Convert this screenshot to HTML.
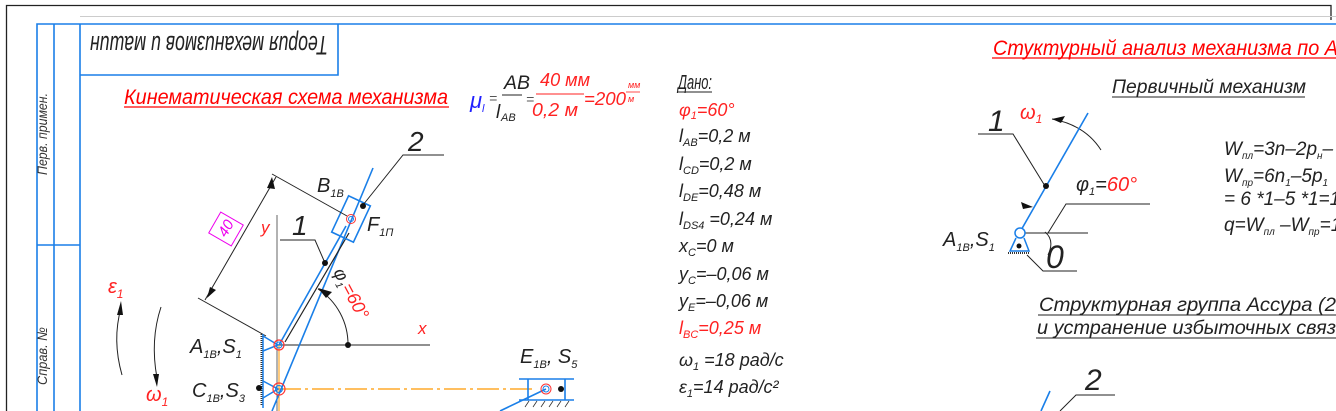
<!DOCTYPE html>
<html><head><meta charset="utf-8"><style>
html,body{margin:0;padding:0;background:#fff;}
svg{display:block}
text{font-family:"Liberation Sans","DejaVu Sans",sans-serif;font-style:italic;}
</style></head><body>
<svg width="1336" height="411" viewBox="0 0 1336 411" xmlns="http://www.w3.org/2000/svg">
<path d="M6.5 411V5.5H1331V20" fill="none" stroke="#222" stroke-width="1.3"/>
<line x1="80" y1="16.5" x2="1336" y2="16.5" stroke="#ccc" stroke-width="1"/>
<g stroke="#1a7fe8" stroke-width="1.6" fill="none">
<path d="M37 411V24H1336"/>
<line x1="54" y1="24" x2="54" y2="411"/>
<line x1="80" y1="24" x2="80" y2="411"/>
<line x1="37" y1="245" x2="80" y2="245"/>
<path d="M80 75H338V24"/>
</g>
<text transform="translate(47 175) rotate(-90)" font-size="14" fill="#333" textLength="82" lengthAdjust="spacingAndGlyphs">Перв. примен.</text>
<text transform="translate(47 385) rotate(-90)" font-size="14" fill="#333" textLength="58" lengthAdjust="spacingAndGlyphs">Справ. №</text>
<text transform="translate(328 36) rotate(180)" font-size="27" fill="#222" textLength="238" lengthAdjust="spacingAndGlyphs">Теория механизмов и машин</text>

<text x="124" y="104" font-size="21" fill="#f00" textLength="324" lengthAdjust="spacingAndGlyphs">Кинематическая схема механизма</text>
<line x1="124" y1="107" x2="449" y2="107" stroke="#f00" stroke-width="1.3"/>
<text x="993" y="55" font-size="21" fill="#f00" textLength="345" lengthAdjust="spacingAndGlyphs">Стуктурный анализ механизма по А</text>
<line x1="992" y1="58" x2="1336" y2="58" stroke="#f00" stroke-width="1.3"/>
<text x="1112" y="93" font-size="19" fill="#222" textLength="194" lengthAdjust="spacingAndGlyphs">Первичный механизм</text>
<line x1="1112" y1="97" x2="1305" y2="97" stroke="#222" stroke-width="1.1"/>
<text x="1039" y="311" font-size="19" fill="#222" textLength="297" lengthAdjust="spacingAndGlyphs">Структурная группа Ассура (2</text>
<line x1="1038" y1="315" x2="1336" y2="315" stroke="#222" stroke-width="1.1"/>
<text x="1037" y="334" font-size="19" fill="#222" textLength="299" lengthAdjust="spacingAndGlyphs">и устранение избыточных связ</text>
<line x1="1036" y1="338" x2="1336" y2="338" stroke="#222" stroke-width="1.1"/>

<text x="470" y="108" font-size="22" fill="#22f">μ</text><text x="482" y="112" font-size="11" fill="#22f">l</text>
<text x="489" y="103" font-size="14" fill="#555">=</text>
<text x="504" y="89" font-size="19" fill="#222" textLength="26" lengthAdjust="spacingAndGlyphs">AB</text>
<line x1="502" y1="95" x2="522" y2="95" stroke="#222"/>
<text x="496" y="118" font-size="19" fill="#222">l</text><text x="501" y="121" font-size="11" fill="#222">AB</text>
<text x="526" y="104" font-size="14" fill="#555">=</text>
<text x="540" y="86" font-size="18" fill="#f22" textLength="50" lengthAdjust="spacingAndGlyphs">40 мм</text>
<line x1="536" y1="94" x2="584" y2="94" stroke="#f22"/>
<text x="532" y="116" font-size="18" fill="#f22" textLength="46" lengthAdjust="spacingAndGlyphs">0,2 м</text>
<text x="584" y="105" font-size="18" fill="#f22" textLength="42" lengthAdjust="spacingAndGlyphs">=200</text>
<text x="628" y="88" font-size="9" fill="#f22">мм</text><line x1="626" y1="92" x2="640" y2="92" stroke="#f22" stroke-width=".8"/><text x="628" y="102" font-size="9" fill="#f22">м</text>

<g font-size="18" fill="#222">
<text x="678" y="89" font-size="20" textLength="34" lengthAdjust="spacingAndGlyphs">Дано:</text>
<line x1="678" y1="92" x2="712" y2="92" stroke="#222"/>
<text x="679" y="116" fill="#f22">φ<tspan font-size="11" dy="3">1</tspan><tspan dy="-3">=60°</tspan></text>
<text x="679" y="142">l<tspan font-size="11" dy="4">AB</tspan><tspan dy="-4">=0,2 м</tspan></text>
<text x="679" y="170">l<tspan font-size="11" dy="4">CD</tspan><tspan dy="-4">=0,2 м</tspan></text>
<text x="679" y="197">l<tspan font-size="11" dy="4">DE</tspan><tspan dy="-4">=0,48 м</tspan></text>
<text x="679" y="225">l<tspan font-size="11" dy="4">DS4</tspan><tspan dy="-4"> =0,24 м</tspan></text>
<text x="679" y="252">x<tspan font-size="11" dy="4">C</tspan><tspan dy="-4">=0 м</tspan></text>
<text x="679" y="280">y<tspan font-size="11" dy="4">C</tspan><tspan dy="-4">=–0,06 м</tspan></text>
<text x="679" y="307">y<tspan font-size="11" dy="4">E</tspan><tspan dy="-4">=–0,06 м</tspan></text>
<text x="679" y="334" fill="#f22">l<tspan font-size="11" dy="4">BC</tspan><tspan dy="-4">=0,25 м</tspan></text>
<text x="679" y="366">ω<tspan font-size="11" dy="4">1</tspan><tspan dy="-4"> =18 рад/с</tspan></text>
<text x="679" y="393">ε<tspan font-size="11" dy="4">1</tspan><tspan dy="-4">=14 рад/с²</tspan></text>
</g>

<g font-size="19" fill="#222">
<text x="1224" y="155">W<tspan font-size="10" dy="4">пл</tspan><tspan dy="-4">=3n–2p</tspan><tspan font-size="10" dy="4">н</tspan><tspan dy="-4">–</tspan></text>
<text x="1224" y="182">W<tspan font-size="10" dy="4">пр</tspan><tspan dy="-4">=6n</tspan><tspan font-size="10" dy="4">1</tspan><tspan dy="-4">–5p</tspan><tspan font-size="10" dy="4">1</tspan></text>
<text x="1224" y="205">= 6 *1–5 *1=1;</text>
<text x="1224" y="231">q=W<tspan font-size="10" dy="4">пл</tspan><tspan dy="-4"> –W</tspan><tspan font-size="10" dy="4">пр</tspan><tspan dy="-4">=1</tspan></text>
</g>

<g fill="none">
<line x1="277" y1="215" x2="277" y2="411" stroke="#666" stroke-width="1"/>
<line x1="279" y1="345" x2="430" y2="345" stroke="#222"/>
<path d="M318 289 A66 66 0 0 1 348 345" stroke="#222"/>
<line x1="279" y1="345" x2="279" y2="411" stroke="#f90" stroke-width="1"/>
<line x1="279" y1="389" x2="536" y2="389" stroke="#f90" stroke-width="1.2" stroke-dasharray="22 4 3 4"/>
<line x1="272" y1="411" x2="373" y2="168" stroke="#1a7fe8" stroke-width="1.6"/>
<line x1="279" y1="345" x2="346" y2="226" stroke="#1a7fe8" stroke-width="1.6"/>
<line x1="285" y1="342" x2="349" y2="233" stroke="#222" stroke-width="1.2"/>
<rect x="-12" y="-20" width="24" height="40" transform="translate(351 219) rotate(25)" stroke="#1a7fe8" stroke-width="1.6"/>
<circle cx="351" cy="219" r="4.5" stroke="#f33"/><circle cx="351" cy="219" r="2.5" stroke="#1a7fe8"/>
<line x1="198" y1="298" x2="266" y2="336" stroke="#222"/>
<line x1="272" y1="174" x2="347" y2="216" stroke="#222"/>
<line x1="205" y1="300" x2="276" y2="177" stroke="#222"/>
<rect x="-13" y="-12" width="26" height="24" transform="translate(226 229) rotate(30)" stroke="#e0e" stroke-width="1"/>
<path d="M280 240H315L325 263" stroke="#222"/>
<path d="M444 155H403L363 205" stroke="#222"/>
<line x1="262" y1="334" x2="262" y2="405" stroke="#333" stroke-width="3" stroke-dasharray="1 1"/>
<path d="M263 336L278 345L263 351M263 381L278 389L263 398" stroke="#1a7fe8" stroke-width="1.5"/>
<line x1="263" y1="334" x2="263" y2="408" stroke="#1a7fe8" stroke-width="1.5"/>
<circle cx="279" cy="345" r="5" stroke="#f33" stroke-width="1.2"/><circle cx="279" cy="345" r="3" stroke="#1a7fe8"/>
<circle cx="279" cy="389" r="6" stroke="#f33" stroke-width="1.2"/><circle cx="279" cy="389" r="3.5" stroke="#1a7fe8"/>
<path d="M519 379H574M519 400H574M528 379V400M565 379V400" stroke="#1a7fe8" stroke-width="1.6"/>
<path d="M500 411L546 389" stroke="#1a7fe8" stroke-width="1.6"/>
<circle cx="546" cy="389" r="5" stroke="#f33"/><circle cx="546" cy="389" r="3" stroke="#1a7fe8"/>
<path d="M525 407l4-6M533 407l4-6M541 407l4-6M549 407l4-6M557 407l4-6M565 407l4-6" stroke="#333" stroke-width=".8"/>
<path d="M122 375 Q112 340 121 308" stroke="#222"/>
<path d="M161 307 Q150 340 157 378" stroke="#222"/>
</g>
<path d="M121 301l-4 14l6 0z" fill="#111"/>
<path d="M157 387l-4-13l6 0z" fill="#111"/>
<g fill="#111"><circle cx="325" cy="263" r="3"/><circle cx="363" cy="206" r="3"/><circle cx="348" cy="345" r="3"/><circle cx="259" cy="388" r="3"/><circle cx="561" cy="389" r="3"/></g>
<path d="M318 288l14 4l-6 6z" fill="#111"/>
<path d="M272 177l-5 11l8 1z" fill="#111"/><path d="M207 298l3-11l6 3z" fill="#111"/>

<g fill="#222" font-size="20">
<text x="317" y="192">B<tspan font-size="11" dy="5">1В</tspan></text>
<text x="367" y="231">F<tspan font-size="11" dy="5">1П</tspan></text>
<text x="408" y="151" font-size="28">2</text>
<text x="292" y="235" font-size="28">1</text>
<text x="190" y="353">A<tspan font-size="11" dy="5">1В</tspan><tspan dy="-5">,S</tspan><tspan font-size="11" dy="5">1</tspan></text>
<text x="192" y="397">C<tspan font-size="11" dy="5">1В</tspan><tspan dy="-5">,S</tspan><tspan font-size="11" dy="5">3</tspan></text>
<text x="520" y="363">E<tspan font-size="11" dy="5">1В</tspan><tspan dy="-5">, S</tspan><tspan font-size="11" dy="5">5</tspan></text>
</g>
<text x="261" y="233" font-size="17" fill="#f22">y</text>
<text x="418" y="334" font-size="17" fill="#f22">x</text>
<text x="108" y="293" font-size="20" fill="#f22">ε<tspan font-size="12" dy="5">1</tspan></text>
<text x="146" y="401" font-size="20" fill="#f22">ω<tspan font-size="12" dy="5">1</tspan></text>
<text transform="translate(333 272) rotate(62)" font-size="18" fill="#222">φ<tspan font-size="10" dy="4">1</tspan><tspan dy="-4" fill="#f22">=60°</tspan></text>
<text transform="translate(226 238) rotate(-60)" font-size="15" fill="#e0e">40</text>

<g fill="none" stroke="#222">
<path d="M978 134H1013L1045 186" />
<path d="M1052 119 Q1085 125 1101 150"/>
<path d="M1045 232 Q1055 240 1048 255"/>
<path d="M1048 233L1066 204H1150"/>
<line x1="1023" y1="233" x2="1088" y2="233"/>
<path d="M1027 255L1043 271H1077"/>
</g>
<line x1="1020" y1="232" x2="1088" y2="113" stroke="#1a7fe8" stroke-width="1.6"/>
<circle cx="1020" cy="233" r="5" fill="#fff" stroke="#1a7fe8" stroke-width="1.5"/>
<path d="M1016 238L1010 251H1029L1024 238" fill="none" stroke="#1a7fe8" stroke-width="1.5"/>
<line x1="1008" y1="253" x2="1030" y2="253" stroke="#333" stroke-width="2" stroke-dasharray="1 1"/>
<g fill="#111"><circle cx="1046" cy="186" r="3"/><circle cx="1019" cy="246" r="2.5"/></g>
<path d="M1052 119l13-3l-4 7z" fill="#111"/><path d="M1033 207l-12-5l2 7z" fill="#111"/>
<text x="988" y="131" font-size="30" fill="#222">1</text>
<text x="1020" y="119" font-size="20" fill="#f22">ω<tspan font-size="12" dy="4">1</tspan></text>
<text x="1076" y="191" font-size="20" fill="#222">φ<tspan font-size="11" dy="4">1</tspan><tspan dy="-4">=</tspan><tspan fill="#f22">60°</tspan></text>
<text x="943" y="246" font-size="20" fill="#222">A<tspan font-size="11" dy="5">1В</tspan><tspan dy="-5">,S</tspan><tspan font-size="11" dy="5">1</tspan></text>
<text x="1046" y="268" font-size="32" fill="#222">0</text>
<line x1="1050" y1="391" x2="1041" y2="411" stroke="#1a7fe8" stroke-width="1.6"/>
<path d="M1060 411L1076 395H1115" fill="none" stroke="#222"/>
<text x="1085" y="390" font-size="30" fill="#222">2</text>
</svg>
</body></html>
